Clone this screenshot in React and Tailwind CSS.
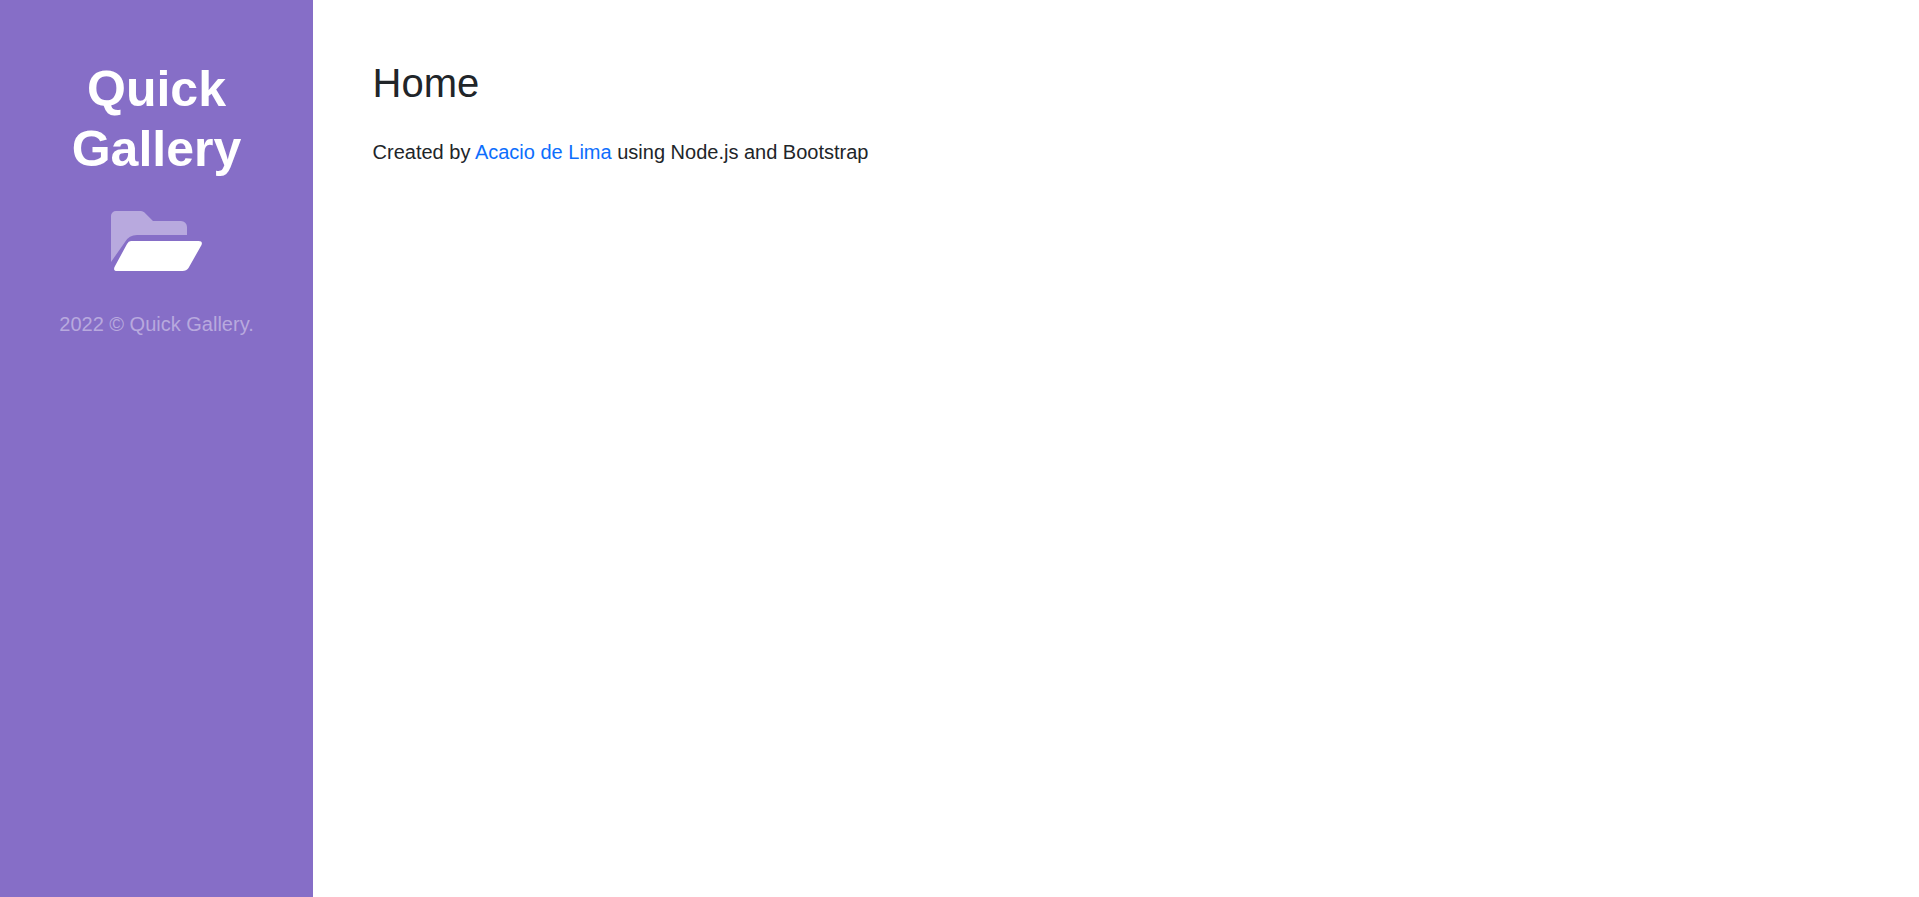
export default function App() {
  return (
    <div className="flex min-h-[897px] bg-white font-['Liberation_Sans',Arial,sans-serif] text-[#212529]">
      {/* sidebar */}
      <aside className="w-[313px] shrink-0 bg-[#866ec7] pt-[59px] text-center">
        <h1 className="text-[50px] leading-[60px] font-bold text-white px-6">Quick Gallery</h1>
        <div className="flex justify-center mt-[32px]">
          <svg width="91" height="60" viewBox="0 0 91 60" className="overflow-visible" aria-hidden="true">
            <path
              fill="#b8a9de"
              d="M0 5a5 5 0 0 1 5-5H30q2 0 3.500 1.500L42 10H70a6 6 0 0 1 6 6V24H26q-8 0-12 7L0 51Z"
            />
            <path
              fill="#fff"
              d="M20 30H87.500q4.500 0 3 4L77.500 57q-2 3-6 3H6q-4 0-2.500-4L16 33q1.500-3 4-3Z"
            />
          </svg>
        </div>
        <p className="mt-[38px] text-[20px] leading-[30px] text-[#b8a9de]">2022 © Quick Gallery.</p>
      </aside>

      {/* content */}
      <main className="flex-1 pl-[59.6px] pt-[59px]">
        <h1 className="text-[40px] leading-[48px] font-normal">Home</h1>
        <p className="mt-[30px] text-[20px] leading-[30px]">
          Created by <a href="#" className="text-[#0d6efd]">Acacio de Lima</a> using Node.js and Bootstrap
        </p>
      </main>
    </div>
  );
}
